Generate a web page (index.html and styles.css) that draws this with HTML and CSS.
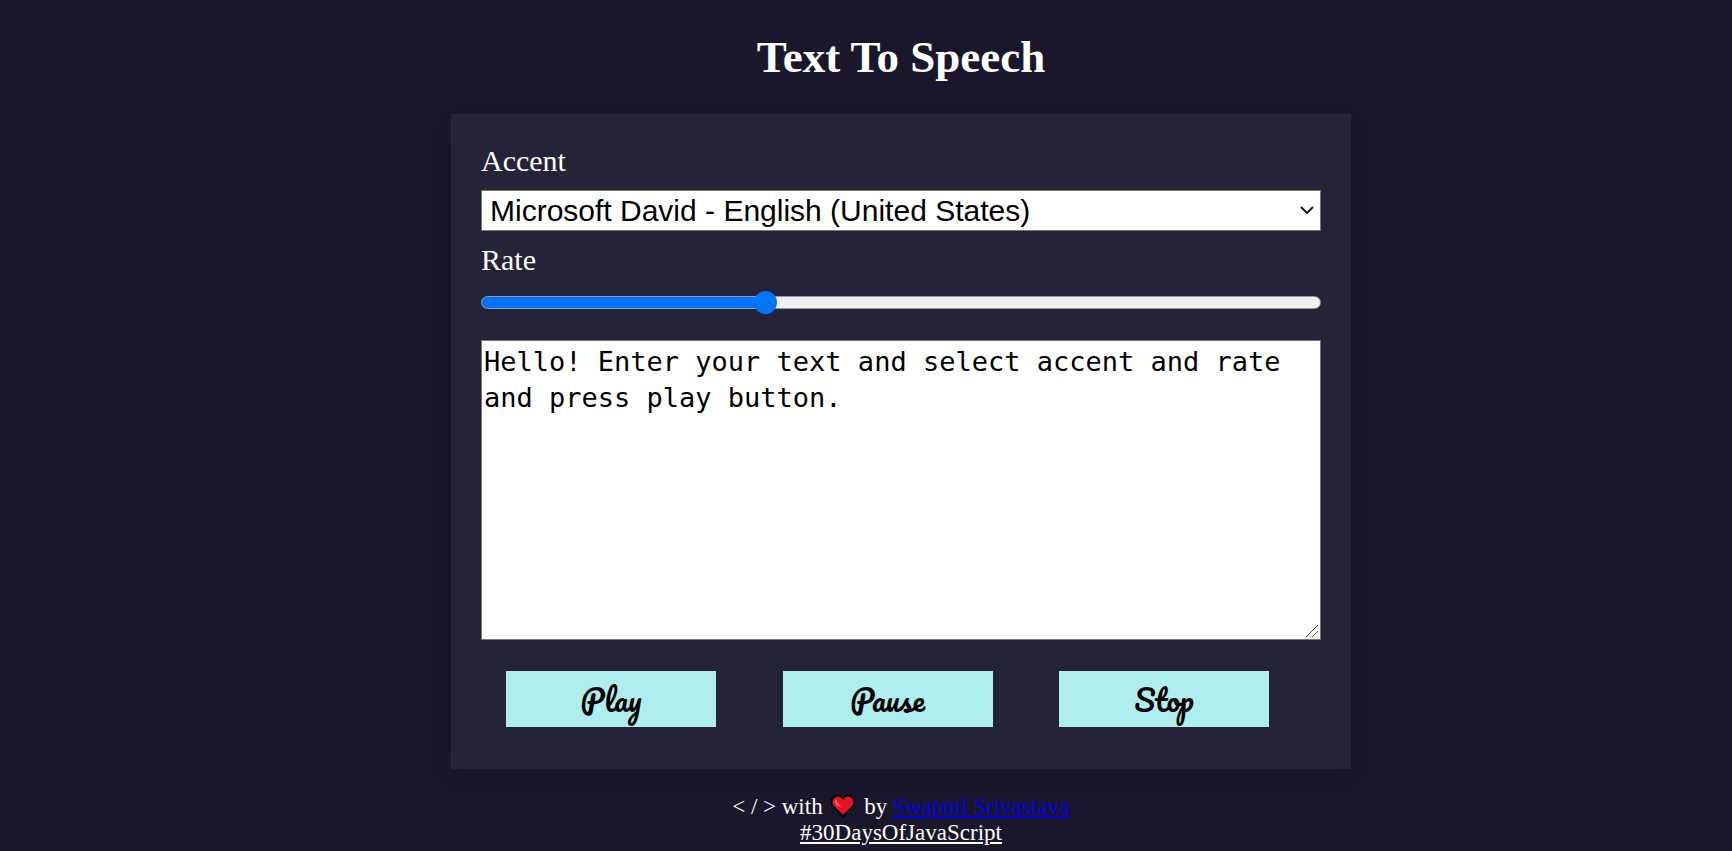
FILE: index.html
```html
<!DOCTYPE html>
<html lang="en">
<head>
<meta charset="utf-8">
<title>Text To Speech</title>
<link rel="stylesheet" href="styles.css">
</head>
<body>
<main class="page">
  <h1 class="title">Text To Speech</h1>
  <form class="card">
    <label class="label" for="accent">Accent</label>
    <div class="select-wrap">
      <select class="select" id="accent">
        <option>Microsoft David - English (United States)</option>
      </select>
      <svg class="chevron" viewBox="0 0 14 8" width="14" height="8" aria-hidden="true"><path d="M1 1l6 6 6-6" fill="none" stroke="#111" stroke-width="1.8"/></svg>
    </div>
    <label class="label" for="rate">Rate</label>
    <input class="range" id="rate" type="range" min="0.5" max="2" step="0.1" value="1">
    <textarea class="text" aria-label="Text to speak" spellcheck="false">Hello! Enter your text and select accent and rate and press play button.</textarea>
    <div class="buttons">
      <button class="button" type="button">Play</button>
      <button class="button" type="button">Pause</button>
      <button class="button" type="button">Stop</button>
    </div>
  </form>
  <footer class="footer">
    <div>&lt; / &gt; with
      <svg class="heart" viewBox="0 0 26 24" width="26" height="24" role="img" aria-label="love"><path d="M13 22.200L3.200 12.500C.8 9.800 1 5.300 3.800 3.100 6.700.9 10.500 1.600 13 4.300c2.500-2.700 6.300-3.400 9.200-1.200 2.800 2.200 3 6.700.6 9.400z" fill="#e81224" stroke="#000" stroke-width="2" stroke-linejoin="round"/><path d="M5.800 6.400c0 2.300 1.600 4.100 3.900 5.600" fill="none" stroke="#f4694e" stroke-width="2" stroke-linecap="round"/></svg>
      by <a class="author" href="#author">Swapnil Srivastava</a></div>
    <a class="tag" href="#challenge">#30DaysOfJavaScript</a>
  </footer>
</main>
</body>
</html>
```
FILE: styles.css
```css
* { box-sizing: border-box; }

body {
  margin: 0;
  padding-left: 70px;
  background: #1a172c;
  color: #fff;
  font-family: "Liberation Serif", "Times New Roman", serif;
}

.page {
  display: flex;
  flex-direction: column;
  align-items: center;
}

.title {
  margin: 30px 0;
  font-size: 45px;
  line-height: 54px;
}

.card {
  display: flex;
  flex-direction: column;
  width: 100%;
  max-width: 900px;
  padding: 30px 30px 42px;
  background: #252338;
  box-shadow: 0 8px 24px rgba(0, 0, 0, 0.1);
}

.label {
  font-size: 30px;
  line-height: 34px;
}

.select-wrap {
  position: relative;
  margin: 12px 0;
}

.select {
  display: block;
  width: 100%;
  height: 41px;
  padding: 0 32px 0 8px;
  appearance: none;
  border: 1px solid #767676;
  border-radius: 0;
  background: #fff;
  color: #000;
  font: 30px "Liberation Sans", Arial, sans-serif;
}

.chevron {
  position: absolute;
  top: 16px;
  right: 7px;
  pointer-events: none;
}

.range {
  width: 100%;
  height: 23px;
  margin: 14px 0 26px;
  appearance: none;
  background: none;
}

.range::-webkit-slider-runnable-track {
  height: 13px;
  border: 1px solid #9a99a3;
  border-radius: 7px;
  background: linear-gradient(to right, #0075ff 34%, #efefef 34%);
}

.range::-webkit-slider-thumb {
  width: 23px;
  height: 23px;
  margin-top: -6px;
  appearance: none;
  border-radius: 50%;
  background: #0075ff;
}

.text {
  display: block;
  height: 300px;
  padding: 3px 2px;
  border: 1px solid #767676;
  background: #fff;
  color: #000;
  font: 27px/36px Consolas, "DejaVu Sans Mono", monospace;
}

.text::-webkit-resizer {
  background:
    linear-gradient(135deg, transparent 47%, #555 47%, #555 53%, transparent 53%) 1px 1px / 12px 12px no-repeat,
    linear-gradient(135deg, transparent 44%, #555 44%, #555 56%, transparent 56%) 7px 7px / 6px 6px no-repeat,
    #fff;
}

.buttons {
  display: flex;
  justify-content: space-between;
  margin-top: 31px;
  padding: 0 52px 0 25px;
}

.button {
  width: 210px;
  height: 56px;
  padding: 0;
  border: 0;
  background: #afeeee;
  color: #000;
  font: 30px Pacifico, cursive;
}

.footer {
  margin-top: 25px;
  font-size: 23px;
  line-height: 26px;
  text-align: center;
}

.heart {
  margin: 0 2px;
  vertical-align: -4px;
}

.author { color: #0000ee; }
.tag { color: #fff; }
```
